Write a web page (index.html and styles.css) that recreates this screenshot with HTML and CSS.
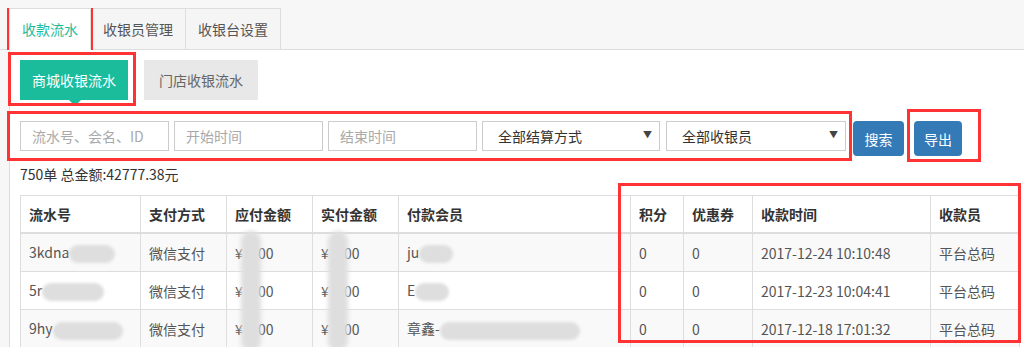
FILE: index.html
```html
<!DOCTYPE html>
<html lang="zh-CN">
<head>
    <meta charset="UTF-8">
    <meta name="viewport" content="width=device-width, initial-scale=1.0">
    <title>收款流水</title>
    <link rel="stylesheet" href="styles.css">
</head>
<body>
    <ul class="tabs">
        <li class="tab active">收款流水</li>
        <li class="tab">收银员管理</li>
        <li class="tab">收银台设置</li>
    </ul>
    <div class="panel">
        <div class="subtabs">
            <div class="subtab current">商城收银流水</div>
            <div class="subtab">门店收银流水</div>
        </div>
        <div class="filters">
            <input class="field" type="text" placeholder="流水号、会名、ID">
            <input class="field" type="text" placeholder="开始时间">
            <input class="field" type="text" placeholder="结束时间">
            <div class="select pay"><span>全部结算方式</span><span class="arrow">▼</span></div>
            <div class="select cashier"><span>全部收银员</span><span class="arrow">▼</span></div>
            <button class="btn search">搜索</button>
            <button class="btn export">导出</button>
        </div>
        <p class="summary">750单 总金额:42777.38元</p>
        <div class="table-wrap">
            <table class="list">
                <colgroup>
                    <col style="width:120px"><col style="width:86px"><col style="width:86px">
                    <col style="width:86px"><col style="width:232px"><col style="width:53px">
                    <col style="width:69px"><col style="width:178px"><col style="width:89px">
                </colgroup>
                <thead>
                    <tr>
                        <th>流水号</th><th>支付方式</th><th>应付金额</th><th>实付金额</th><th>付款会员</th>
                        <th>积分</th><th>优惠券</th><th>收款时间</th><th>收款员</th>
                    </tr>
                </thead>
                <tbody>
                    <tr>
                        <td>3kdna<span class="blur b-long"></span></td><td>微信支付</td><td>¥ <span class="gap"></span>00</td><td>¥ <span class="gap"></span>00</td>
                        <td>ju<span class="blur b-short"></span></td>
                        <td>0</td><td>0</td><td>2017-12-24 10:10:48</td><td>平台总码</td>
                    </tr>
                    <tr>
                        <td>5r<span class="blur b-mid"></span></td><td>微信支付</td><td>¥ <span class="gap"></span>00</td><td>¥ <span class="gap"></span>00</td>
                        <td>E<span class="blur b-short"></span></td>
                        <td>0</td><td>0</td><td>2017-12-23 10:04:41</td><td>平台总码</td>
                    </tr>
                    <tr>
                        <td>9hy<span class="blur b-wide"></span></td><td>微信支付</td><td>¥ <span class="gap"></span>00</td><td>¥ <span class="gap"></span>00</td>
                        <td>章鑫-<span class="blur b-name"></span></td>
                        <td>0</td><td>0</td><td>2017-12-18 17:01:32</td><td>平台总码</td>
                    </tr>
                </tbody>
            </table>
            <div class="strip strip-due"></div>
            <div class="strip strip-paid"></div>
        </div>
    </div>

    <div class="mark mark-tab"></div>
    <div class="mark mark-sub"></div>
    <div class="mark mark-filter"></div>
    <div class="mark mark-export"></div>
    <div class="mark mark-cols"></div>
</body>
</html>
```

FILE: styles.css
```css
body {
    margin: 0;
    position: relative;
    height: 347px;
    overflow: hidden;
    background-color: #f7f7f7;
    font-family: "Noto Sans CJK SC", "Liberation Sans", sans-serif;
    font-size: 14px;
    color: #333;}
.tabs {
    display: flex;
    list-style: none;
    margin: 0;
    padding: 8px 0 0 9px;
    border-bottom: 1px solid #ddd;}
.tab {
    height: 40px;
    line-height: 40px;
    padding: 0 12px;
    margin-right: -1px;
    margin-bottom: -1px;
    border: 1px solid #ddd;
    background-color: #f5f5f5;
    color: #555;}
.tab.active {
    position: relative;
    z-index: 1;
    background-color: #fff;
    border-bottom-color: #fff;
    color: #1abc9c;}
.panel {
    margin-left: 9px;
    padding: 10px 0 0 10px;
    border-left: 1px solid #ddd;
    background-color: #fff;
    height: 300px;}
.subtabs {
    display: flex;
    gap: 16px;}
.subtab {
    position: relative;
    height: 40px;
    line-height: 40px;
    padding: 0 15px;
    background-color: #e8e8e8;
    color: #666;}
.subtab.current {
    padding: 0 12px;
    background-color: #1abc9c;
    color: #fff;}
.subtab.current::after {
    content: "";
    position: absolute;
    left: 50%;
    bottom: -6px;
    margin-left: -5px;
    border-top: 6px solid #1abc9c;
    border-left: 6px solid transparent;
    border-right: 6px solid transparent;}
.filters {
    display: flex;
    align-items: flex-start;
    margin-top: 21px;}
.field {
    box-sizing: border-box;
    width: 149px;
    height: 30px;
    margin: 0 5px 0 0;
    padding: 0 11px;
    border: 1px solid #ccc;
    border-radius: 0;
    font-family: inherit;
    font-size: 14px;
    color: #333;
    outline: none;}
.field::placeholder {
    color: #a9a9a9;}
.select {
    box-sizing: border-box;
    display: flex;
    justify-content: space-between;
    align-items: center;
    height: 30px;
    padding: 0 7px 0 15px;
    border: 1px solid #ccc;
    color: #333;}
.select.pay {
    width: 178px;
    margin-right: 6px;}
.select.cashier {
    width: 180px;
    margin-right: 7px;}
.arrow {
    font-size: 9px;
    color: #444;
    margin-top: -4px;}
.btn {
    height: 35px;
    padding: 0;
    border: none;
    border-radius: 4px;
    background-color: #337ab7;
    color: #fff;
    font-family: inherit;
    font-size: 14px;}
.btn.search {
    width: 51px;
    margin-right: 10px;}
.btn.export {
    width: 48px;}
.summary {
    margin: 8px 0 11px;
    line-height: 20px;
    color: #333;}
.table-wrap {
    position: relative;}
.list {
    width: 999px;
    border-collapse: collapse;
    table-layout: fixed;
    border: 1px solid #ddd;}
.list th, .list td {
    padding: 8px;
    line-height: 20px;
    text-align: left;
    border: 1px solid #ddd;
    white-space: nowrap;
    overflow: hidden;}
.list th {
    font-weight: 700;
    color: #333;
    border-bottom-width: 2px;}
.list td {
    color: #555;}
.list tbody tr:nth-child(odd) {
    background-color: #f9f9f9;}
.blur {
    display: inline-block;
    height: 18px;
    vertical-align: middle;
    border-radius: 9px;
    background-color: #dedede;
    filter: blur(1.5px);}
.b-long { width: 46px; }
.b-mid { width: 62px; }
.b-wide { width: 70px; }
.b-short { width: 34px; }
.b-name { width: 140px; }
.gap {
    display: inline-block;
    width: 12px;}
.strip {
    position: absolute;
    top: 36px;
    width: 20px;
    height: 120px;
    border-radius: 10px;
    background-color: #dedede;
    filter: blur(2px);}
.strip-due { left: 221px; }
.strip-paid { left: 308px; }
.mark {
    position: absolute;
    box-sizing: border-box;
    border: 3px solid #f33;}
.mark-tab { left: 7px; top: 8px; width: 86px; height: 42px; }
.mark-sub { left: 8px; top: 52px; width: 128px; height: 54px; }
.mark-filter { left: 7px; top: 111px; width: 845px; height: 50px; }
.mark-export { left: 907px; top: 109px; width: 74px; height: 53px; }
.mark-cols { left: 618px; top: 183px; width: 403px; height: 160px; }
```
